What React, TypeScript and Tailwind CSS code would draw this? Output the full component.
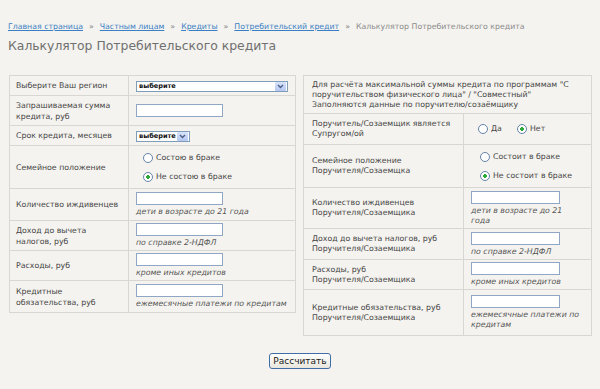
import React from "react";

const cell = "border border-[#d9d7d1] align-middle";

const Select = ({ width }: { width: string }) => (
  <span
    className={`inline-flex items-center h-[11px] border border-[#7f9db9] bg-white ${width}`}
  >
    <span className="flex-1 pl-[2px] text-[6.6px] leading-[9px] font-bold text-[#111]">
      выберите
    </span>
    <span className="flex items-center justify-center w-[11px] h-[9px] mr-[1px] rounded-[1px] bg-gradient-to-b from-[#d9e3fb] to-[#b4c6f2]">
      <svg width="7" height="5" viewBox="0 0 7 5">
        <path d="M1 1 L3.5 3.5 L6 1" fill="none" stroke="#4d6185" strokeWidth="1.4" />
      </svg>
    </span>
  </span>
);

const Radio = ({ name, checked }: { name: string; checked?: boolean }) => (
  <input
    type="radio"
    name={name}
    defaultChecked={checked}
    className="appearance-none w-[10px] h-[10px] rounded-full border border-[#6583a8] bg-white checked:bg-[radial-gradient(circle,#2fa83a_28%,#ffffff_36%)] shrink-0"
  />
);

const Field = ({ width }: { width: string }) => (
  <input
    type="text"
    className={`block h-[13px] border border-[#8fa7c4] bg-white ${width}`}
  />
);

const Hint = ({ children }: { children: React.ReactNode }) => (
  <div className="mt-[2px] italic text-[#555] leading-[10px]">{children}</div>
);

export default function App() {
  return (
    <div className="min-h-screen bg-[#f4f3ef] font-['DejaVu_Sans',sans-serif] text-[7.8px] text-[#444]">
      <div className="pl-[8px] pt-[22px]">
        <div className="flex items-center gap-[6px] leading-[10px] text-[#8a8a8a]">
          <a href="#" className="text-[#3a7ec4] underline">Главная страница</a>
          <span>»</span>
          <a href="#" className="text-[#3a7ec4] underline">Частным лицам</a>
          <span>»</span>
          <a href="#" className="text-[#3a7ec4] underline">Кредиты</a>
          <span>»</span>
          <a href="#" className="text-[#3a7ec4] underline">Потребительский кредит</a>
          <span>»</span>
          <span>Калькулятор Потребительского кредита</span>
        </div>
        <h1 className="mt-[6px] text-[12.4px] leading-[16px] text-[#707070]">
          Калькулятор Потребительского кредита
        </h1>

        <div className="flex items-start gap-[7px] mt-[21px] ml-[1px]">
          <table className="border-collapse table-fixed w-[287px] leading-[11px]">
            <colgroup>
              <col className="w-[119px]" />
              <col />
            </colgroup>
            <tbody>
              <tr className="h-[20px]">
                <td className={`${cell} pl-[6px]`}>Выберите Ваш регион</td>
                <td className={`${cell} pl-[7px]`}>
                  <Select width="w-[152px]" />
                </td>
              </tr>
              <tr className="h-[30px]">
                <td className={`${cell} pl-[6px]`}>
                  Запрашиваемая сумма
                  <br />
                  кредита, руб
                </td>
                <td className={`${cell} pl-[7px]`}>
                  <Field width="w-[87px]" />
                </td>
              </tr>
              <tr className="h-[20px]">
                <td className={`${cell} pl-[6px]`}>Срок кредита, месяцев</td>
                <td className={`${cell} pl-[7px]`}>
                  <Select width="w-[54px]" />
                </td>
              </tr>
              <tr className="h-[43px]">
                <td className={`${cell} pl-[6px]`}>Семейное положение</td>
                <td className={`${cell} pl-[7px]`}>
                  <div className="flex flex-col gap-[7px] ml-[7px]">
                    <label className="flex items-center gap-[3px] leading-[12px]">
                      <Radio name="fam" />
                      Состою в браке
                    </label>
                    <label className="flex items-center gap-[3px] leading-[12px]">
                      <Radio name="fam" checked />
                      Не состою в браке
                    </label>
                  </div>
                </td>
              </tr>
              <tr className="h-[32px]">
                <td className={`${cell} pl-[6px]`}>Количество иждивенцев</td>
                <td className={`${cell} pl-[7px]`}>
                  <Field width="w-[87px]" />
                  <Hint>дети в возрасте до 21 года</Hint>
                </td>
              </tr>
              <tr className="h-[30px]">
                <td className={`${cell} pl-[6px]`}>
                  Доход до вычета
                  <br />
                  налогов, руб
                </td>
                <td className={`${cell} pl-[7px]`}>
                  <Field width="w-[87px]" />
                  <Hint>по справке 2-НДФЛ</Hint>
                </td>
              </tr>
              <tr className="h-[30px]">
                <td className={`${cell} pl-[6px]`}>Расходы, руб</td>
                <td className={`${cell} pl-[7px]`}>
                  <Field width="w-[87px]" />
                  <Hint>кроме иных кредитов</Hint>
                </td>
              </tr>
              <tr className="h-[32px]">
                <td className={`${cell} pl-[6px]`}>
                  Кредитные
                  <br />
                  обязательства, руб
                </td>
                <td className={`${cell} pl-[7px] whitespace-nowrap`}>
                  <Field width="w-[87px]" />
                  <Hint>ежемесячные платежи по кредитам</Hint>
                </td>
              </tr>
            </tbody>
          </table>

          <table className="border-collapse table-fixed w-[289px] leading-[10px]">
            <colgroup>
              <col className="w-[160px]" />
              <col />
            </colgroup>
            <tbody>
              <tr className="h-[38px]">
                <td colSpan={2} className={`${cell} pl-[8px] whitespace-nowrap`}>
                  Для расчёта максимальной суммы кредита по программам "С
                  <br />
                  поручительством физического лица" / "Совместный"
                  <br />
                  Заполняются данные по поручителю/созаёмщику
                </td>
              </tr>
              <tr className="h-[31px]">
                <td className={`${cell} pl-[8px]`}>
                  Поручитель/Созаемщик является
                  <br />
                  Супругом/ой
                </td>
                <td className={`${cell} pl-[7px]`}>
                  <div className="flex items-center ml-[7px] leading-[12px]">
                    <label className="flex items-center gap-[3px] w-[39px]">
                      <Radio name="sp" />
                      Да
                    </label>
                    <label className="flex items-center gap-[3px]">
                      <Radio name="sp" checked />
                      Нет
                    </label>
                  </div>
                </td>
              </tr>
              <tr className="h-[43px]">
                <td className={`${cell} pl-[8px]`}>
                  Семейное положение
                  <br />
                  Поручителя/Созаемщка
                </td>
                <td className={`${cell} pl-[7px]`}>
                  <div className="flex flex-col gap-[7px] ml-[9px]">
                    <label className="flex items-center gap-[3px] leading-[12px]">
                      <Radio name="gfam" />
                      Состоит в браке
                    </label>
                    <label className="flex items-center gap-[3px] leading-[12px]">
                      <Radio name="gfam" checked />
                      Не состоит в браке
                    </label>
                  </div>
                </td>
              </tr>
              <tr className="h-[41px]">
                <td className={`${cell} pl-[8px]`}>
                  Количество иждивенцев
                  <br />
                  Поручителя/Созаемщика
                </td>
                <td className={`${cell} pl-[7px]`}>
                  <Field width="w-[89px]" />
                  <Hint>
                    дети в возрасте до 21
                    <br />
                    года
                  </Hint>
                </td>
              </tr>
              <tr className="h-[31px]">
                <td className={`${cell} pl-[8px]`}>
                  Доход до вычета налогов, руб
                  <br />
                  Поручителя/Созаемщика
                </td>
                <td className={`${cell} pl-[7px]`}>
                  <Field width="w-[89px]" />
                  <Hint>по справке 2-НДФЛ</Hint>
                </td>
              </tr>
              <tr className="h-[30px]">
                <td className={`${cell} pl-[8px]`}>
                  Расходы, руб
                  <br />
                  Поручителя/Созаемщика
                </td>
                <td className={`${cell} pl-[7px]`}>
                  <Field width="w-[89px]" />
                  <Hint>кроме иных кредитов</Hint>
                </td>
              </tr>
              <tr className="h-[46px]">
                <td className={`${cell} pl-[8px]`}>
                  Кредитные обязательства, руб
                  <br />
                  Поручителя/Созаемщика
                </td>
                <td className={`${cell} pl-[7px]`}>
                  <Field width="w-[89px]" />
                  <Hint>
                    ежемесячные платежи по
                    <br />
                    кредитам
                  </Hint>
                </td>
              </tr>
            </tbody>
          </table>
        </div>
      </div>

      <div className="flex justify-center mt-[17px]">
        <button className="h-[16px] w-[62px] rounded-[3px] border border-[#3f6ea6] bg-gradient-to-b from-white to-[#e8e6dc] text-[9px] leading-[14px] text-[#1a1a1a]">
          Рассчитать
        </button>
      </div>
    </div>
  );
}
